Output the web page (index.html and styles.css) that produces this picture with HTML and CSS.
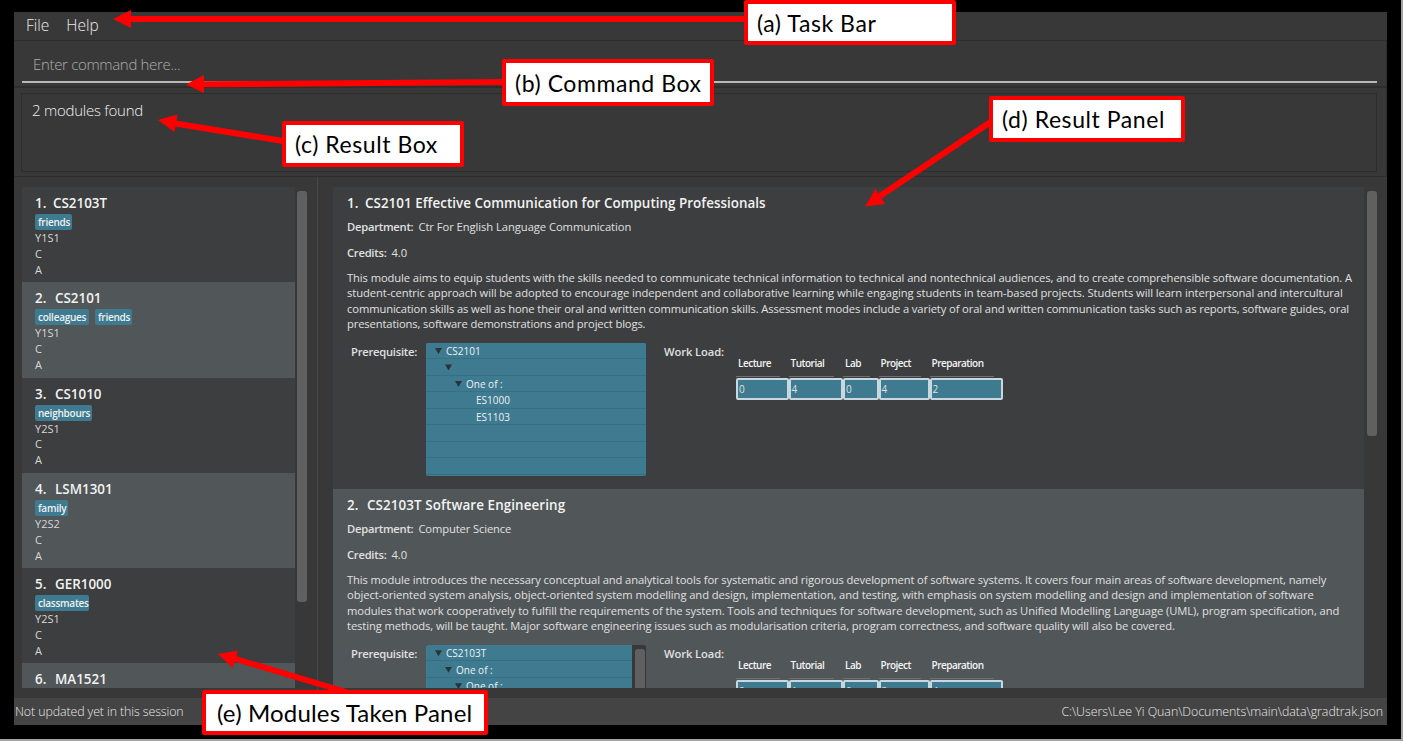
FILE: index.html
```html
<!DOCTYPE html>
<html lang="en">
<head>
<meta charset="utf-8">
<title>GradTrak</title>
<link rel="stylesheet" href="styles.css">
</head>
<body>
<div class="frame">
<div class="app">
  <nav class="menu"><span class="file">File</span><span class="help">Help</span></nav>
  <div class="command"><div class="field"><span>Enter command here...</span></div></div>
  <div class="result"><div class="display"><span>2 modules found</span></div></div>
  <main class="split">
    <section class="taken">
      <div class="list">
        <article class="cell"><h2><span class="n1">1.</span>CS2103T</h2><div class="tags"><b class="w-friends">friends</b></div><p>Y1S1</p><p>C</p><p>A</p></article>
        <article class="cell"><h2><span>2.</span>CS2101</h2><div class="tags"><b class="w-coll">colleagues</b><b class="w-friends">friends</b></div><p>Y1S1</p><p>C</p><p>A</p></article>
        <article class="cell"><h2><span>3.</span>CS1010</h2><div class="tags"><b class="w-neigh">neighbours</b></div><p>Y2S1</p><p>C</p><p>A</p></article>
        <article class="cell"><h2><span>4.</span>LSM1301</h2><div class="tags"><b class="w-fam">family</b></div><p>Y2S2</p><p>C</p><p>A</p></article>
        <article class="cell"><h2><span>5.</span>GER1000</h2><div class="tags"><b class="w-class">classmates</b></div><p>Y2S1</p><p>C</p><p>A</p></article>
        <article class="cell last"><h2><span>6.</span>MA1521</h2></article>
      </div>
      <div class="bar"><div class="thumb taken-thumb"></div></div>
    </section>
    <section class="details">
      <div class="list">
        <article class="module">
          <h2 class="t1"><span class="n1">1.</span>CS2101 Effective Communication for Computing Professionals</h2>
          <div class="row"><b class="dep">Department:</b><span class="v1">Ctr For English Language Communication</span></div>
          <div class="row credits"><b class="cred">Credits:</b><span>4.0</span></div>
          <div class="desc">
            <span class="a1">This module aims to equip students with the skills needed to communicate technical information to technical and nontechnical audiences, and to create comprehensible software documentation. A</span>
            <span class="a2">student-centric approach will be adopted to encourage independent and collaborative learning while engaging students in team-based projects. Students will learn interpersonal and intercultural</span>
            <span class="a3">communication skills as well as hone their oral and written communication skills. Assessment modes include a variety of oral and written communication tasks such as reports, software guides, oral</span>
            <span class="a4">presentations, software demonstrations and project blogs.</span>
          </div>
          <div class="extra">
            <b class="pre">Prerequisite:</b>
            <div class="tree">
              <div class="node"><i></i>CS2101</div>
              <div class="node l1"><i></i></div>
              <div class="node l2"><i></i>One of :</div>
              <div class="node l3">ES1000</div>
              <div class="node l3">ES1103</div>
              <div class="node"></div><div class="node"></div><div class="node"></div><div class="node"></div>
            </div>
            <b class="load">Work Load:</b>
            <div class="table">
              <div class="col"><b>Lecture</b><hr><span>0</span></div>
              <div class="col"><b>Tutorial</b><hr><span>4</span></div>
              <div class="col"><b>Lab</b><hr><span>0</span></div>
              <div class="col"><b>Project</b><hr><span>4</span></div>
              <div class="col"><b>Preparation</b><hr><span>2</span></div>
            </div>
          </div>
        </article>
        <article class="module">
          <h2 class="t2"><span>2.</span>CS2103T Software Engineering</h2>
          <div class="row"><b class="dep">Department:</b><span class="v2">Computer Science</span></div>
          <div class="row credits"><b class="cred">Credits:</b><span>4.0</span></div>
          <div class="desc">
            <span class="b1">This module introduces the necessary conceptual and analytical tools for systematic and rigorous development of software systems. It covers four main areas of software development, namely</span>
            <span class="b2">object-oriented system analysis, object-oriented system modelling and design, implementation, and testing, with emphasis on system modelling and design and implementation of software</span>
            <span class="b3">modules that work cooperatively to fulfill the requirements of the system. Tools and techniques for software development, such as Unified Modelling Language (UML), program specification, and</span>
            <span class="b4">testing methods, will be taught. Major software engineering issues such as modularisation criteria, program correctness, and software quality will also be covered.</span>
          </div>
          <div class="extra">
            <b class="pre">Prerequisite:</b>
            <div class="tree scrolling">
              <div class="nodes">
                <div class="node"><i></i>CS2103T</div>
                <div class="node l1"><i></i>One of :</div>
                <div class="node l2"><i></i>One of :</div>
              </div>
              <div class="bar"><div class="thumb"></div></div>
            </div>
            <b class="load">Work Load:</b>
            <div class="table">
              <div class="col"><b>Lecture</b><hr><span>2</span></div>
              <div class="col"><b>Tutorial</b><hr><span>1</span></div>
              <div class="col"><b>Lab</b><hr><span>0</span></div>
              <div class="col"><b>Project</b><hr><span>3</span></div>
              <div class="col"><b>Preparation</b><hr><span>4</span></div>
            </div>
          </div>
        </article>
      </div>
      <div class="bar"><div class="thumb details-thumb"></div></div>
    </section>
  </main>
  <footer class="status"><span class="s1">Not updated yet in this session</span><span class="s2">C:\Users\Lee Yi Quan\Documents\main\data\gradtrak.json</span></footer>
</div>
<svg class="arrows" width="1403" height="741" viewBox="0 0 1403 741">
  <g stroke="#f00" stroke-width="6">
    <path d="M130 19H747M202 84.3L504 82M174 123.2L286 141.5M880 196L992 121M234 658.5L346 692"/>
  </g>
  <g fill="#f00">
    <path d="M113 19L131 10V28ZM186 84.4L204 75V93ZM158 120L177.500 114.500L174.500 132ZM865 206.500L875.500 189L885 204ZM218 654L238 650.500L232.500 668Z"/>
  </g>
</svg>
<div class="label la"><span>(a) Task Bar</span></div>
<div class="label lb"><span>(b) Command Box</span></div>
<div class="label lc"><span>(c) Result Box</span></div>
<div class="label ld"><span>(d) Result Panel</span></div>
<div class="label le"><span>(e) Modules Taken Panel</span></div>
</div>
</body>
</html>
```
FILE: styles.css
```css
* { box-sizing: border-box; }
body { margin: 0; background: #a3a3a3; font-family: "Open Sans", "Noto Sans", sans-serif; overflow: hidden; }
h2, p { margin: 0; }
.frame { position: relative; width: 1401px; height: 739px; padding: 12px 14px 14px; background: #000; }
.app { display: flex; flex-direction: column; height: 713px; background: #383838; color: #e0e0e0; white-space: nowrap; }

.menu { height: 29px; border-bottom: 1px solid #2e2e2e; padding: 3px 12px; font-size: 15.5px; font-weight: 300; line-height: 21px; color: #ececec; }
.help { margin-left: 17px; }
.command { height: 47px; padding: 0 9px 0 8px; border-bottom: 2px solid #2e2e2e; border-right: 1px solid #303030; }
.field { height: 42px; padding: 12px 11px; border-bottom: 2px solid #b9b9b9; font-size: 15px; font-weight: 300; letter-spacing: -0.33px; line-height: 22px; color: #adadad; }
.result { height: 89px; padding: 5px 9px 4px 7px; border-bottom: 1px solid #2d2d2d; border-right: 1px solid #303030; }
.display { height: 79px; border: 1px solid #2d2d2d; padding: 5px 10px; font-size: 15px; font-weight: 300; letter-spacing: -0.25px; line-height: 22px; color: #f0f0f0; }

.split { display: flex; flex: 1; }
.taken { display: flex; width: 304px; padding: 10px 10px 9px 8px; border-right: 1px solid #484848; }
.details { display: flex; flex: 1; padding: 10px 10px 9px 15px; }
.list { height: 501px; overflow: hidden; }
.taken .list { width: 273px; }
.details .list { width: 1031px; }
.bar { flex: 1; padding: 4px 0 0 2px; }
.thumb { width: 10px; height: 60px; border-radius: 3px; background: #606060; }
.details > .bar { padding-left: 3px; }
.taken-thumb { height: 411px; }
.details-thumb { height: 245px; }

h2 { height: 21px; font-size: 13.4px; line-height: 22px; font-weight: 600; color: #f2f2f2; }
h2 span { display: inline-block; width: 20px; letter-spacing: 0; }
h2 .n1 { width: 18px; }
.t1 { letter-spacing: 0.035px; }
.t2 { letter-spacing: 0.1px; }
.cell { height: 95.25px; padding: 5px 13px; background: #3c3e3f; font-size: 11px; color: #d8d8d8; }
.last { height: 25px; }
.cell:nth-child(even), .module:nth-child(even) { background: #515658; }
.cell p { line-height: 15.9px; }
.tags { display: flex; gap: 6px; height: 17px; padding-top: 1px; }
.tags b { height: 16px; padding: 0 3px; border-radius: 2px; background: #3e7b91; color: #f0f0f0; font-size: 10px; font-weight: 600; letter-spacing: -0.25px; line-height: 16px; }
.w-friends { width: 37px; }
.w-coll { width: 54px; }
.w-neigh { width: 57px; }
.w-fam { width: 33px; }
.w-class { width: 54px; }

.module { height: 302.2px; padding: 5px 14px; background: #3c3e3f; font-size: 11.2px; }
.row { display: flex; gap: 5px; height: 18px; margin-top: 5px; line-height: 18px; }
.row b, .extra > b { font-weight: 600; letter-spacing: -0.24px; line-height: 18px; }
.credits { margin-top: 8px; }
.v1 { letter-spacing: -0.05px; }
.v2 { letter-spacing: -0.12px; }
.desc { display: flex; flex-direction: column; align-items: flex-start; margin-top: 8px; line-height: 15.3px; }
.a1 { letter-spacing: -0.087px; }
.a2 { letter-spacing: -0.074px; }
.a3 { letter-spacing: -0.105px; }
.a4 { letter-spacing: -0.12px; }
.b1 { letter-spacing: -0.1px; }
.b2 { letter-spacing: -0.072px; }
.b3 { letter-spacing: -0.075px; }
.b4 { letter-spacing: -0.092px; }
.extra { display: flex; margin: 11.5px 0 0 4px; }
.pre { width: 75px; }
.extra > .load { width: 73px; margin-left: 17px; padding-left: 1px; letter-spacing: -0.1px; }
.tree { width: 220px; height: 133.5px; overflow: hidden; border-radius: 2px; background: #3e7b91; font-size: 10px; color: #f0f0f0; }
.scrolling { display: flex; background: #383838; }
.nodes { width: 206px; }
.scrolling .bar { padding: 4px 0 0 3px; }
.node { display: flex; align-items: center; height: 16.5px; padding: 1px 0 0 9px; background: #3e7b91; border-bottom: 1px solid #387083; }
.l1 { padding-left: 19px; }
.l2 { padding-left: 29px; }
.l3 { padding-left: 50px; }
.node i { width: 7px; height: 6px; margin-right: 4px; background: #2b3336; clip-path: polygon(0 0, 100% 0, 50% 100%); }
.table { display: grid; grid-template-columns: 52.5px 54.5px 35.5px 51px 73px; margin-top: 11px; font-size: 10px; }
.col b { display: block; height: 22px; padding-left: 2px; font-size: 10px; font-weight: 600; letter-spacing: -0.5px; line-height: 18px; color: #f4f4f4; }
.col hr { height: 1px; margin: 0 9px 1px 0; border: 0; background: #707070; }
.col span { display: block; height: 22px; padding-left: 1px; border: 2px solid #c8d8de; border-radius: 2px; background: #3e7b91; line-height: 18px; }

.status { display: flex; justify-content: space-between; height: 27px; padding: 0 4px 0 1px; background: #444; font-size: 12.4px; font-weight: 300; line-height: 27px; color: #e8e8e8; }
.s1 { letter-spacing: -0.1px; }
.s2 { letter-spacing: -0.04px; }

.arrows { position: absolute; left: 0; top: 0; }
.label { position: absolute; display: flex; align-items: center; border: 4px solid #f00; border-radius: 2px; background: #fff; color: #000; padding-left: 9px; font: 23px Lato, sans-serif; letter-spacing: 0.57px; white-space: nowrap; }
.la { left: 744px; top: 0; width: 212px; height: 45px; }
.lb { left: 502px; top: 59px; width: 212px; height: 47px; }
.lc { left: 282px; top: 121px; width: 182px; height: 46px; }
.ld { left: 989px; top: 96px; width: 196px; height: 46px; }
.le { left: 202px; top: 690px; width: 286px; height: 45px; padding-left: 11px; font-size: 24px; letter-spacing: 0.16px; }
```
